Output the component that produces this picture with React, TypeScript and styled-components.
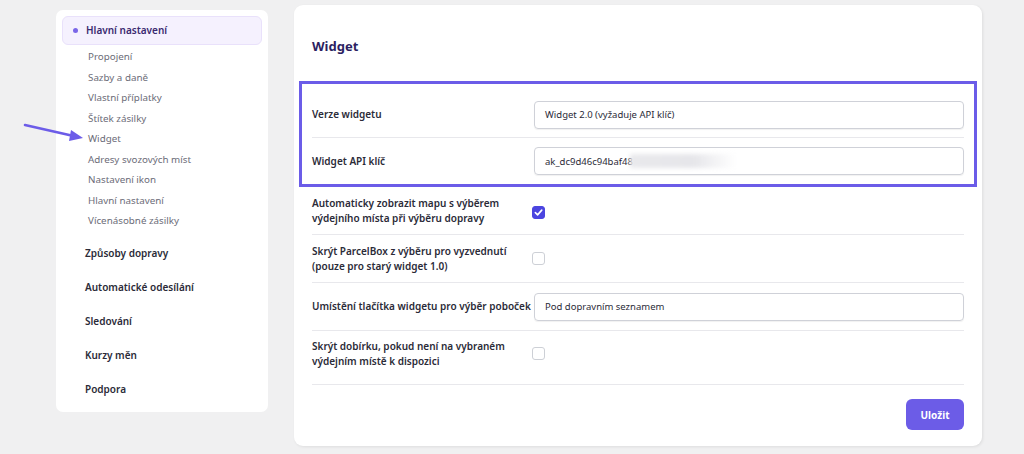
import React from "react";
import styled, { createGlobalStyle } from "styled-components";

const GlobalStyle = createGlobalStyle`
  html, body {
    margin: 0;
    padding: 0;
    background: #f0f0f1;
    font-family: "Noto Sans", "Open Sans", "Liberation Sans", sans-serif;
    color: #2b2b38;
  }
  * { box-sizing: border-box; }
`;

const Page = styled.div`
  position: relative;
  width: 1024px;
  height: 454px;
  display: flex;
  align-items: flex-start;
  gap: 26px;
  padding: 5px 0 0 56px;
`;

const Sidebar = styled.nav`
  width: 212px;
  height: 402px;
  margin-top: 5px;
  background: #fff;
  border-radius: 7px;
  padding: 6px;
  display: flex;
  flex-direction: column;
`;

const ActiveItem = styled.div`
  height: 30px;
  display: flex;
  align-items: center;
  gap: 8px;
  padding-left: 10px;
  background: #f5f1fe;
  border: 1px solid #e9e1fb;
  border-radius: 6px;
  font-size: 10px;
  font-weight: 600;
  color: #3a2a70;
  margin-bottom: 2px;
`;

const Dot = styled.span`
  width: 5px;
  height: 5px;
  border-radius: 50%;
  background: #7a66e8;
`;

const SubList = styled.div`
  display: flex;
  flex-direction: column;
  padding-left: 26px;
`;

const SubItem = styled.div`
  height: 20.5px;
  display: flex;
  align-items: center;
  font-size: 9.8px;
  color: #6c6c78;
`;

const MainList = styled.div`
  display: flex;
  flex-direction: column;
  margin-top: 5px;
  padding-left: 23px;
`;

const MainItem = styled.div`
  height: 34px;
  display: flex;
  align-items: center;
  font-size: 10px;
  font-weight: 600;
  color: #2b2b38;
`;

const Panel = styled.main`
  width: 688px;
  height: 441px;
  background: #fff;
  border-radius: 9px;
  box-shadow: 1px 1px 3px rgba(0, 0, 0, 0.08);
  padding: 0 18px;
  display: flex;
  flex-direction: column;
`;

const Title = styled.h2`
  margin: 0;
  padding: 31px 0 25px;
  font-size: 13px;
  line-height: 20px;
  font-weight: 700;
  color: #2c1f62;
`;

const Highlight = styled.section`
  margin: 0 -13px;
  border: 3px solid #6b5ce8;
  padding: 8px 10px 0;
`;

const Row = styled.div<{ $tall?: boolean; $last?: boolean }>`
  display: grid;
  grid-template-columns: 220px 1fr;
  align-items: center;
  padding: ${(p) => (p.$tall ? "8px 0 15px" : "8px 0")};
  min-height: ${(p) => (p.$tall ? "54px" : "48px")};
  border-bottom: ${(p) => (p.$last ? "none" : "1px solid #e8e8ec")};
`;

const BoxRow = styled(Row)`
  min-height: 46px;
`;

const Label = styled.div`
  font-size: 10px;
  line-height: 15px;
  font-weight: 600;
  color: #2b2b38;
`;

const Field = styled.div`
  height: 28px;
  border: 1px solid #cfd1d8;
  border-radius: 4px;
  box-shadow: 0 1px 1px rgba(0, 0, 0, 0.06);
  display: flex;
  align-items: center;
  padding-left: 10px;
  font-size: 9.5px;
  color: #2b2b38;
  margin-left: 2px;
`;

const Redacted = styled.span`
  display: inline-block;
  width: 106px;
  height: 14px;
  margin-left: -3px;
  background: linear-gradient(90deg, #e9e9ec 0%, #e6e6ea 60%, rgba(240, 240, 242, 0) 100%);
  filter: blur(2px);
`;

const Check = styled.span<{ $on?: boolean }>`
  width: 13px;
  height: 13px;
  border-radius: 3px;
  border: 1px solid ${(p) => (p.$on ? "#4b45e0" : "#cdd0d6")};
  background: ${(p) => (p.$on ? "#4b45e0" : "#fff")};
  display: inline-flex;
  align-items: center;
  justify-content: center;
`;

const Footer = styled.div`
  display: flex;
  justify-content: flex-end;
  padding-top: 14px;
`;

const SaveButton = styled.button`
  width: 58px;
  height: 31px;
  border: none;
  border-radius: 6px;
  background: #6c5ce7;
  color: #fff;
  font-family: inherit;
  font-size: 10px;
  font-weight: 700;
`;

const Pointer = styled.svg`
  position: absolute;
  left: 22px;
  top: 118px;
`;

const subItems = [
  "Propojení",
  "Sazby a daně",
  "Vlastní příplatky",
  "Štítek zásilky",
  "Widget",
  "Adresy svozových míst",
  "Nastavení ikon",
  "Hlavní nastavení",
  "Vícenásobné zásilky",
];

const mainItems = [
  "Způsoby dopravy",
  "Automatické odesílání",
  "Sledování",
  "Kurzy měn",
  "Podpora",
];

const Tick = () => (
  <svg width="9" height="9" viewBox="0 0 10 10">
    <path d="M1.5 5.2 L4 7.6 L8.6 2.4" fill="none" stroke="#fff" strokeWidth="1.8" strokeLinecap="round" strokeLinejoin="round" />
  </svg>
);

export default function App() {
  return (
    <>
      <GlobalStyle />
      <Page>
        <Sidebar>
          <ActiveItem>
            <Dot />
            Hlavní nastavení
          </ActiveItem>
          <SubList>
            {subItems.map((s) => (
              <SubItem key={s}>{s}</SubItem>
            ))}
          </SubList>
          <MainList>
            {mainItems.map((m) => (
              <MainItem key={m}>{m}</MainItem>
            ))}
          </MainList>
        </Sidebar>

        <Panel>
          <Title>Widget</Title>
          <Highlight>
            <BoxRow>
              <Label>Verze widgetu</Label>
              <Field>Widget 2.0 (vyžaduje API klíč)</Field>
            </BoxRow>
            <BoxRow $last>
              <Label>Widget API klíč</Label>
              <Field>
                ak_dc9d46c94baf48
                <Redacted />
              </Field>
            </BoxRow>
          </Highlight>
          <Row>
            <Label>
              Automaticky zobrazit mapu s výběrem
              <br />
              výdejního místa při výběru dopravy
            </Label>
            <div>
              <Check $on>
                <Tick />
              </Check>
            </div>
          </Row>
          <Row>
            <Label>
              Skrýt ParcelBox z výběru pro vyzvednutí
              <br />
              (pouze pro starý widget 1.0)
            </Label>
            <div>
              <Check />
            </div>
          </Row>
          <Row>
            <Label>Umístění tlačítka widgetu pro výběr poboček</Label>
            <Field>Pod dopravním seznamem</Field>
          </Row>
          <Row $tall>
            <Label>
              Skrýt dobírku, pokud není na vybraném
              <br />
              výdejním místě k dispozici
            </Label>
            <div>
              <Check />
            </div>
          </Row>
          <Footer>
            <SaveButton>Uložit</SaveButton>
          </Footer>
        </Panel>

        <Pointer width="66" height="26" viewBox="0 0 66 26">
          <path d="M3 7 L56 19" stroke="#6c5ce8" strokeWidth="2.6" strokeLinecap="round" />
          <path d="M49 12 L61 20 L47 23 Z" fill="#6c5ce8" />
        </Pointer>
      </Page>
    </>
  );
}
